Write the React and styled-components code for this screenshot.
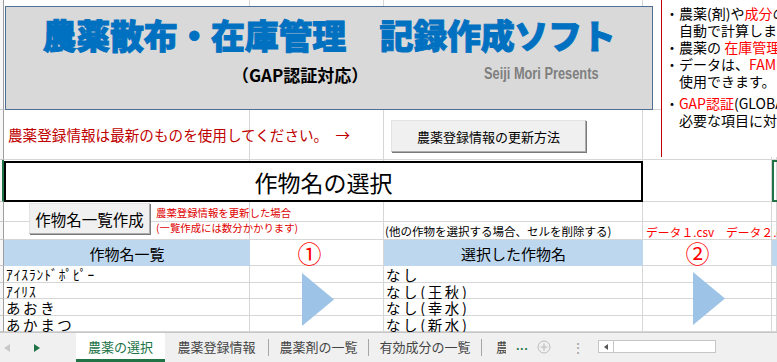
import React from "react";
import styled, { createGlobalStyle } from "styled-components";

const GlobalStyle = createGlobalStyle`
  *, *::before, *::after { box-sizing: border-box; }
  html, body { margin: 0; padding: 0; background: #fff; }
  body { font-family: "Noto Sans CJK JP", "Noto Sans", sans-serif; color: #000; }
`;

const Window = styled.div`
  width: 777px;
  height: 362px;
  overflow: hidden;
  display: flex;
  flex-direction: column;
  background: #fff;
`;

const Sheet = styled.div`
  display: grid;
  grid-template-columns: 4px 246px 134px 259px 129px 5px;
  grid-template-rows: 110px 50px 42px 20px 18px 26px 17px 16px 17px 16px;
  height: 332px;
  overflow: hidden;
`;

const RowHead = styled.div`
  grid-row: ${(p) => p.$row};
  grid-column: 1;
  background: #f7f7f7;
  border-bottom: 1px solid #c8c8c8;
  border-right: ${(p) => (p.$active ? "2px solid #217346" : "1px solid #9e9e9e")};
`;

const GridCell = styled.div`
  grid-row: ${(p) => p.$row};
  grid-column: ${(p) => p.$col};
  border-right: 1px solid #d6d6d6;
  border-bottom: 1px solid #d6d6d6;
`;

const TitleBox = styled.div`
  grid-row: 1;
  grid-column: 2 / 6;
  align-self: start;
  justify-self: start;
  margin: 6px 0 0 1px;
  width: 648px;
  height: 104px;
  background: #d9d9d9;
  border: 1px solid #4f6f92;
  padding-top: 11px;
  display: flex;
  flex-direction: column;
`;

const MainTitle = styled.div`
  font-size: 34px;
  line-height: 34px;
  font-weight: 900;
  color: #0070c0;
  -webkit-text-stroke: 0.9px #0070c0;
  text-align: center;
  white-space: nowrap;
  letter-spacing: -0.3px;
`;

const SubLine = styled.div`
  display: flex;
  align-items: center;
  height: 20px;
  margin-top: 12px;
  padding-left: 226px;
`;

const SubTitle = styled.span`
  font-size: 17px;
  font-weight: 700;
`;

const Author = styled.span`
  margin-left: 116px;
  font-family: "Liberation Sans", sans-serif;
  font-size: 16px;
  font-weight: 700;
  color: #7f7f7f;
  white-space: nowrap;
  transform: scaleX(0.8);
  transform-origin: left center;
`;

const NotePanel = styled.div`
  grid-row: 1 / 3;
  grid-column: 5 / 7;
  align-self: start;
  justify-self: start;
  margin-left: 18px;
  width: 240px;
  height: 157px;
  background: #fff;
  border-left: 1px solid #c00000;
  padding: 5px 0 0 3px;
  font-size: 14px;
  line-height: 17px;
  white-space: nowrap;
  overflow: hidden;
`;

const NoteLine = styled.div`
  padding-left: ${(p) => (p.$indent ? "14px" : "0")};
  margin-top: ${(p) => (p.$gap ? "5px" : "0")};
`;

const Red = styled.span`
  color: #ff0000;
`;

const Notice = styled.div`
  grid-row: 2;
  grid-column: 2 / 4;
  align-self: center;
  padding-left: 4px;
  margin-top: -2px;
  font-size: 14.6px;
  color: #c00000;
  white-space: nowrap;
`;

const OfficeButton = styled.button`
  font-family: inherit;
  background: #f0f0f0;
  border: 1px solid #adadad;
  border-top-color: #e3e3e3;
  border-left-color: #e3e3e3;
  box-shadow: 1px 1px 0 #7a7a7a;
  color: #000;
  padding: 0;
  display: flex;
  align-items: center;
  justify-content: center;
  white-space: nowrap;
`;

const UpdateButton = styled(OfficeButton)`
  grid-row: 2;
  grid-column: 4;
  align-self: start;
  justify-self: start;
  margin: 10px 0 0 7px;
  width: 195px;
  height: 32px;
  font-size: 13px;
`;

const SectionTitle = styled.div`
  grid-row: 3;
  grid-column: 2 / 5;
  margin-top: 1px;
  border: 2px solid #000;
  background: #fff;
  display: flex;
  align-items: center;
  justify-content: center;
  font-size: 23px;
`;

const ActiveCell = styled.div`
  grid-row: 3;
  grid-column: 6;
  width: 40px;
  border: 2px solid #217346;
`;

const CreateArea = styled.div`
  grid-row: 4 / 6;
  grid-column: 2 / 4;
  display: flex;
  align-items: flex-start;
  padding-left: 25px;
`;

const CreateButton = styled(OfficeButton)`
  margin-top: 1px;
  width: 121px;
  height: 31px;
  font-size: 15.5px;
`;

const SmallWarning = styled.div`
  margin: 3px 0 0 6px;
  font-size: 10.4px;
  line-height: 15px;
  color: #e00000;
  white-space: nowrap;
`;

const Hint = styled.div`
  grid-row: 5;
  grid-column: 4;
  align-self: center;
  padding-left: 1px;
  font-size: 11.5px;
  white-space: nowrap;
`;

const CsvNames = styled.div`
  grid-row: 5;
  grid-column: 5 / 7;
  align-self: center;
  padding-left: 3px;
  font-size: 11.8px;
  color: #ff0000;
  white-space: nowrap;
`;

const HeaderCell = styled.div`
  grid-row: 6;
  grid-column: ${(p) => p.$col};
  background: #bdd7ee;
  display: flex;
  align-items: center;
  justify-content: center;
  font-size: 15px;
  white-space: nowrap;
`;

const StepMark = styled.div`
  grid-row: 6;
  grid-column: ${(p) => p.$col};
  display: flex;
  align-items: center;
  justify-content: center;
  padding-right: ${(p) => p.$shift}px;
  font-size: 24px;
  line-height: 26px;
  color: #ff0000;
`;

const DataCell = styled.div`
  grid-row: ${(p) => p.$row};
  grid-column: ${(p) => p.$col};
  display: flex;
  align-items: center;
  padding-left: 2px;
  font-size: ${(p) => (p.$narrow ? "13.5px" : "14.5px")};
  letter-spacing: ${(p) => (p.$narrow ? "0.9px" : "2.6px")};
  line-height: 15px;
  white-space: nowrap;
  overflow: hidden;
`;

const Arrow = styled.svg`
  grid-row: 7 / 11;
  grid-column: ${(p) => p.$col};
  margin: ${(p) => p.$top}px 0 0 ${(p) => p.$left}px;
`;

const TabBar = styled.div`
  height: 30px;
  display: flex;
  align-items: stretch;
  background: #f0f0f0;
  border-top: 1px solid #c6c6c6;
  font-size: 13px;
  color: #444;
`;

const NavArea = styled.div`
  width: 76px;
  display: flex;
  align-items: center;
  padding-left: 4px;
  gap: 24px;
`;

const NavArrow = styled.svg`
  display: block;
`;

const Tab = styled.div`
  width: ${(p) => p.$w}px;
  display: flex;
  align-items: center;
  justify-content: center;
  white-space: nowrap;
  overflow: hidden;
  background: ${(p) => (p.$active ? "#fff" : "transparent")};
  color: ${(p) => (p.$active ? "#217346" : "#444")};
  border-bottom: ${(p) => (p.$active ? "3px solid #217346" : "3px solid transparent")};
`;

const Separator = styled.div`
  width: 1px;
  align-self: center;
  height: 17px;
  background: #a6a6a6;
`;

const CutTab = styled.div`
  width: 10px;
  margin-left: 14px;
  display: flex;
  align-items: center;
  overflow: hidden;
  white-space: nowrap;
  padding-bottom: 3px;
`;

const More = styled.div`
  display: flex;
  align-items: center;
  margin-left: 10px;
  color: #217346;
  font-weight: 700;
  font-size: 11px;
  letter-spacing: 0.5px;
  padding-bottom: 5px;
`;

const AddSheet = styled.div`
  display: flex;
  align-items: center;
  margin-left: 9px;
  padding-bottom: 2px;
`;

const Dots = styled.div`
  display: flex;
  align-items: center;
  margin-left: 20px;
  color: #a0a0a0;
  font-size: 14px;
  padding-bottom: 2px;
`;

const ScrollBox = styled.div`
  align-self: center;
  margin: 0 0 2px 13px;
  width: 118px;
  height: 13px;
  background: #fff;
  border: 1px solid #c6c6c6;
  display: flex;
`;

const ScrollBtn = styled.div`
  width: 15px;
  border-right: 1px solid #c6c6c6;
  display: flex;
  align-items: center;
  justify-content: center;
`;

const crops = [
  { name: "ｱｲｽﾗﾝﾄﾞﾎﾟﾋﾟｰ", narrow: true, sel: "なし" },
  { name: "ｱｲﾘｽ", narrow: true, sel: "なし(王秋)" },
  { name: "あおき", sel: "なし(幸水)" },
  { name: "あかまつ", sel: "なし(新水)" },
];

const tabs = [
  { label: "農薬の選択", w: 89, active: true },
  { label: "農薬登録情報", w: 103 },
  { label: "農薬剤の一覧", w: 99 },
  { label: "有効成分の一覧", w: 112 },
];

const Triangle = ({ col, top, left }) => (
  <Arrow $col={col} $top={top} $left={left} width="32" height="53" viewBox="0 0 32 53">
    <polygon points="0,0 32,26.5 0,53" fill="#9dc3e6" />
  </Arrow>
);

export default function App() {
  const rows = Array.from({ length: 10 }, (_, i) => i + 1);
  return (
    <>
      <GlobalStyle />
      <Window>
        <Sheet>
          {rows.map((r) => (
            <React.Fragment key={r}>
              <RowHead $row={r} $active={r === 3} />
              {[2, 3, 4, 5, 6].map((c) => (
                <GridCell key={c} $row={r} $col={c} />
              ))}
            </React.Fragment>
          ))}

          <TitleBox>
            <MainTitle>農薬散布・在庫管理　記録作成ソフト</MainTitle>
            <SubLine>
              <SubTitle>（GAP認証対応）</SubTitle>
              <Author>Seiji Mori Presents</Author>
            </SubLine>
          </TitleBox>

          <NotePanel>
            <NoteLine>・農薬(剤)や<Red>成分</Red>の使用回数を</NoteLine>
            <NoteLine $indent>自動で計算します。</NoteLine>
            <NoteLine>・農薬の <Red>在庫管理</Red>ができます。</NoteLine>
            <NoteLine>・データは、<Red>FAMIC</Red>の農薬登録情報を</NoteLine>
            <NoteLine $indent>使用できます。</NoteLine>
            <NoteLine $gap>・<Red>GAP認証</Red>(GLOBALG.A.P.等)の</NoteLine>
            <NoteLine $indent>必要な項目に対応しています。</NoteLine>
          </NotePanel>

          <Notice>農薬登録情報は最新のものを使用してください。　→</Notice>
          <UpdateButton>農薬登録情報の更新方法</UpdateButton>

          <SectionTitle>作物名の選択</SectionTitle>
          <ActiveCell />

          <CreateArea>
            <CreateButton>作物名一覧作成</CreateButton>
            <SmallWarning>
              農薬登録情報を更新した場合
              <br />
              (一覧作成には数分かかります)
            </SmallWarning>
          </CreateArea>
          <Hint>(他の作物を選択する場合、セルを削除する)</Hint>
          <CsvNames>データ１.csv　データ２.csv</CsvNames>

          <HeaderCell $col={2}>作物名一覧</HeaderCell>
          <StepMark $col={3} $shift={15}>①</StepMark>
          <HeaderCell $col={4}>選択した作物名</HeaderCell>
          <StepMark $col={5} $shift={20}>②</StepMark>
          <HeaderCell $col={6} />

          {crops.map((c, i) => (
            <React.Fragment key={c.name}>
              <DataCell $row={7 + i} $col={2} $narrow={c.narrow}>
                {c.name}
              </DataCell>
              <DataCell $row={7 + i} $col={4}>
                {c.sel}
              </DataCell>
            </React.Fragment>
          ))}

          <Triangle col={3} top={7} left={52} />
          <Triangle col={5} top={6} left={50} />
        </Sheet>

        <TabBar>
          <NavArea>
            <NavArrow width="6" height="8" viewBox="0 0 6 8">
              <polygon points="6,0 0,4 6,8" fill="#c8c8c8" />
            </NavArrow>
            <NavArrow width="6" height="8" viewBox="0 0 6 8">
              <polygon points="0,0 6,4 0,8" fill="#217346" />
            </NavArrow>
          </NavArea>
          {tabs.map((t, i) => (
            <React.Fragment key={t.label}>
              {i > 1 && <Separator />}
              <Tab $w={t.w} $active={t.active}>
                {t.label}
              </Tab>
            </React.Fragment>
          ))}
          <Separator />
          <CutTab>農</CutTab>
          <More>...</More>
          <AddSheet>
            <svg width="14" height="14" viewBox="0 0 14 14">
              <circle cx="7" cy="7" r="6" fill="none" stroke="#bdbdbd" strokeWidth="1" />
              <path d="M7 3.5v7M3.5 7h7" stroke="#bdbdbd" strokeWidth="1.2" />
            </svg>
          </AddSheet>
          <Dots>⋮</Dots>
          <ScrollBox>
            <ScrollBtn>
              <svg width="4" height="6" viewBox="0 0 4 6">
                <polygon points="4,0 0,3 4,6" fill="#555" />
              </svg>
            </ScrollBtn>
          </ScrollBox>
        </TabBar>
      </Window>
    </>
  );
}
